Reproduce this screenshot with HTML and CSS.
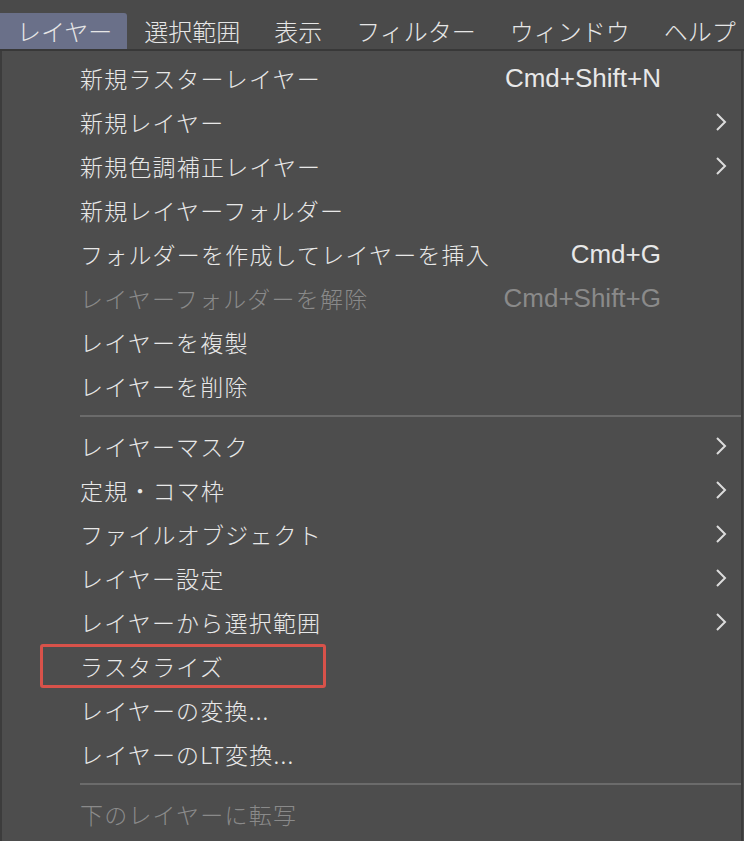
FILE: index.html
```html
<!DOCTYPE html>
<html lang="ja">
<head>
    <meta charset="UTF-8">
    <meta name="viewport" content="width=device-width, initial-scale=1.0">
    <title>レイヤーメニュー</title>
    <link rel="stylesheet" href="styles.css">
</head>
<body>
    <div class="menubar">
        <div class="menubar-item active">レイヤー</div>
        <div class="menubar-item">選択範囲</div>
        <div class="menubar-item">表示</div>
        <div class="menubar-item">フィルター</div>
        <div class="menubar-item">ウィンドウ</div>
        <div class="menubar-item">ヘルプ</div>
    </div>

    <div class="dropdown">
        <div class="item"><span class="label">新規ラスターレイヤー</span><span class="shortcut">Cmd+Shift+N</span><span class="arrow"></span></div>
        <div class="item"><span class="label">新規レイヤー</span><span class="shortcut"></span><span class="arrow"><svg width="12" height="20" viewBox="0 0 12 20"><path d="M2 2 L10 10 L2 18" fill="none" stroke="#dcdcdc" stroke-width="2"/></svg></span></div>
        <div class="item"><span class="label">新規色調補正レイヤー</span><span class="shortcut"></span><span class="arrow"><svg width="12" height="20" viewBox="0 0 12 20"><path d="M2 2 L10 10 L2 18" fill="none" stroke="#dcdcdc" stroke-width="2"/></svg></span></div>
        <div class="item"><span class="label">新規レイヤーフォルダー</span><span class="shortcut"></span><span class="arrow"></span></div>
        <div class="item"><span class="label">フォルダーを作成してレイヤーを挿入</span><span class="shortcut">Cmd+G</span><span class="arrow"></span></div>
        <div class="item disabled"><span class="label">レイヤーフォルダーを解除</span><span class="shortcut">Cmd+Shift+G</span><span class="arrow"></span></div>
        <div class="item"><span class="label">レイヤーを複製</span><span class="shortcut"></span><span class="arrow"></span></div>
        <div class="item"><span class="label">レイヤーを削除</span><span class="shortcut"></span><span class="arrow"></span></div>

        <div class="separator"></div>

        <div class="item"><span class="label">レイヤーマスク</span><span class="shortcut"></span><span class="arrow"><svg width="12" height="20" viewBox="0 0 12 20"><path d="M2 2 L10 10 L2 18" fill="none" stroke="#dcdcdc" stroke-width="2"/></svg></span></div>
        <div class="item"><span class="label">定規・コマ枠</span><span class="shortcut"></span><span class="arrow"><svg width="12" height="20" viewBox="0 0 12 20"><path d="M2 2 L10 10 L2 18" fill="none" stroke="#dcdcdc" stroke-width="2"/></svg></span></div>
        <div class="item"><span class="label">ファイルオブジェクト</span><span class="shortcut"></span><span class="arrow"><svg width="12" height="20" viewBox="0 0 12 20"><path d="M2 2 L10 10 L2 18" fill="none" stroke="#dcdcdc" stroke-width="2"/></svg></span></div>
        <div class="item"><span class="label">レイヤー設定</span><span class="shortcut"></span><span class="arrow"><svg width="12" height="20" viewBox="0 0 12 20"><path d="M2 2 L10 10 L2 18" fill="none" stroke="#dcdcdc" stroke-width="2"/></svg></span></div>
        <div class="item"><span class="label">レイヤーから選択範囲</span><span class="shortcut"></span><span class="arrow"><svg width="12" height="20" viewBox="0 0 12 20"><path d="M2 2 L10 10 L2 18" fill="none" stroke="#dcdcdc" stroke-width="2"/></svg></span></div>
        <div class="item marked"><span class="label">ラスタライズ</span><span class="shortcut"></span><span class="arrow"></span><span class="mark"></span></div>
        <div class="item"><span class="label">レイヤーの変換...</span><span class="shortcut"></span><span class="arrow"></span></div>
        <div class="item"><span class="label">レイヤーのLT変換...</span><span class="shortcut"></span><span class="arrow"></span></div>

        <div class="separator"></div>

        <div class="item disabled"><span class="label">下のレイヤーに転写</span><span class="shortcut"></span><span class="arrow"></span></div>
    </div>
</body>
</html>
```

FILE: styles.css
```css
body {
    margin: 0;
    background-color: #4c4c4c;
    color: #e8e8e8;
    font-family: "Noto Sans CJK JP", "Noto Sans", sans-serif;
    font-weight: 300;
    overflow: hidden;
}

.menubar {
    display: flex;
    align-items: flex-end;
    height: 49px;
    background-color: #4a4a4a;
    border-bottom: 2px solid #383838;
}

.menubar-item {
    height: 36px;
    line-height: 36px;
    padding: 0 17px;
    font-size: 24px;
    white-space: nowrap;
    color: #e6e6e6;
}

.menubar-item.active {
    padding-left: 17px;
    padding-right: 15px;
    background-color: #6a7089;
    border-radius: 0 3px 0 0;
}

.dropdown {
    width: 739px;
    padding-top: 5px;
    border-left: 2px solid #3c3c3c;
    border-right: 2px solid #3c3c3c;
    background-color: #4d4d4d;
    height: 800px;
}

.item {
    position: relative;
    display: grid;
    grid-template-columns: 1fr auto 80px;
    align-items: center;
    height: 44px;
    padding-left: 78px;
}

.label {
    font-size: 23px;
    letter-spacing: 1.2px;
    white-space: nowrap;
}

.shortcut {
    font-family: "Liberation Sans", Arial, sans-serif;
    font-weight: 400;
    font-size: 26px;
    text-align: right;
}

.arrow {
    display: flex;
    align-items: center;
    padding-left: 54px;
}

.item.disabled {
    color: #8a8a8a;
}

.separator {
    height: 2px;
    margin: 7px 0 7px 78px;
    background-color: #6b6b6b;
}

.mark {
    position: absolute;
    left: 38px;
    top: 0;
    width: 280px;
    height: 38px;
    border: 3px solid #d8524a;
    border-radius: 3px;
}
```
